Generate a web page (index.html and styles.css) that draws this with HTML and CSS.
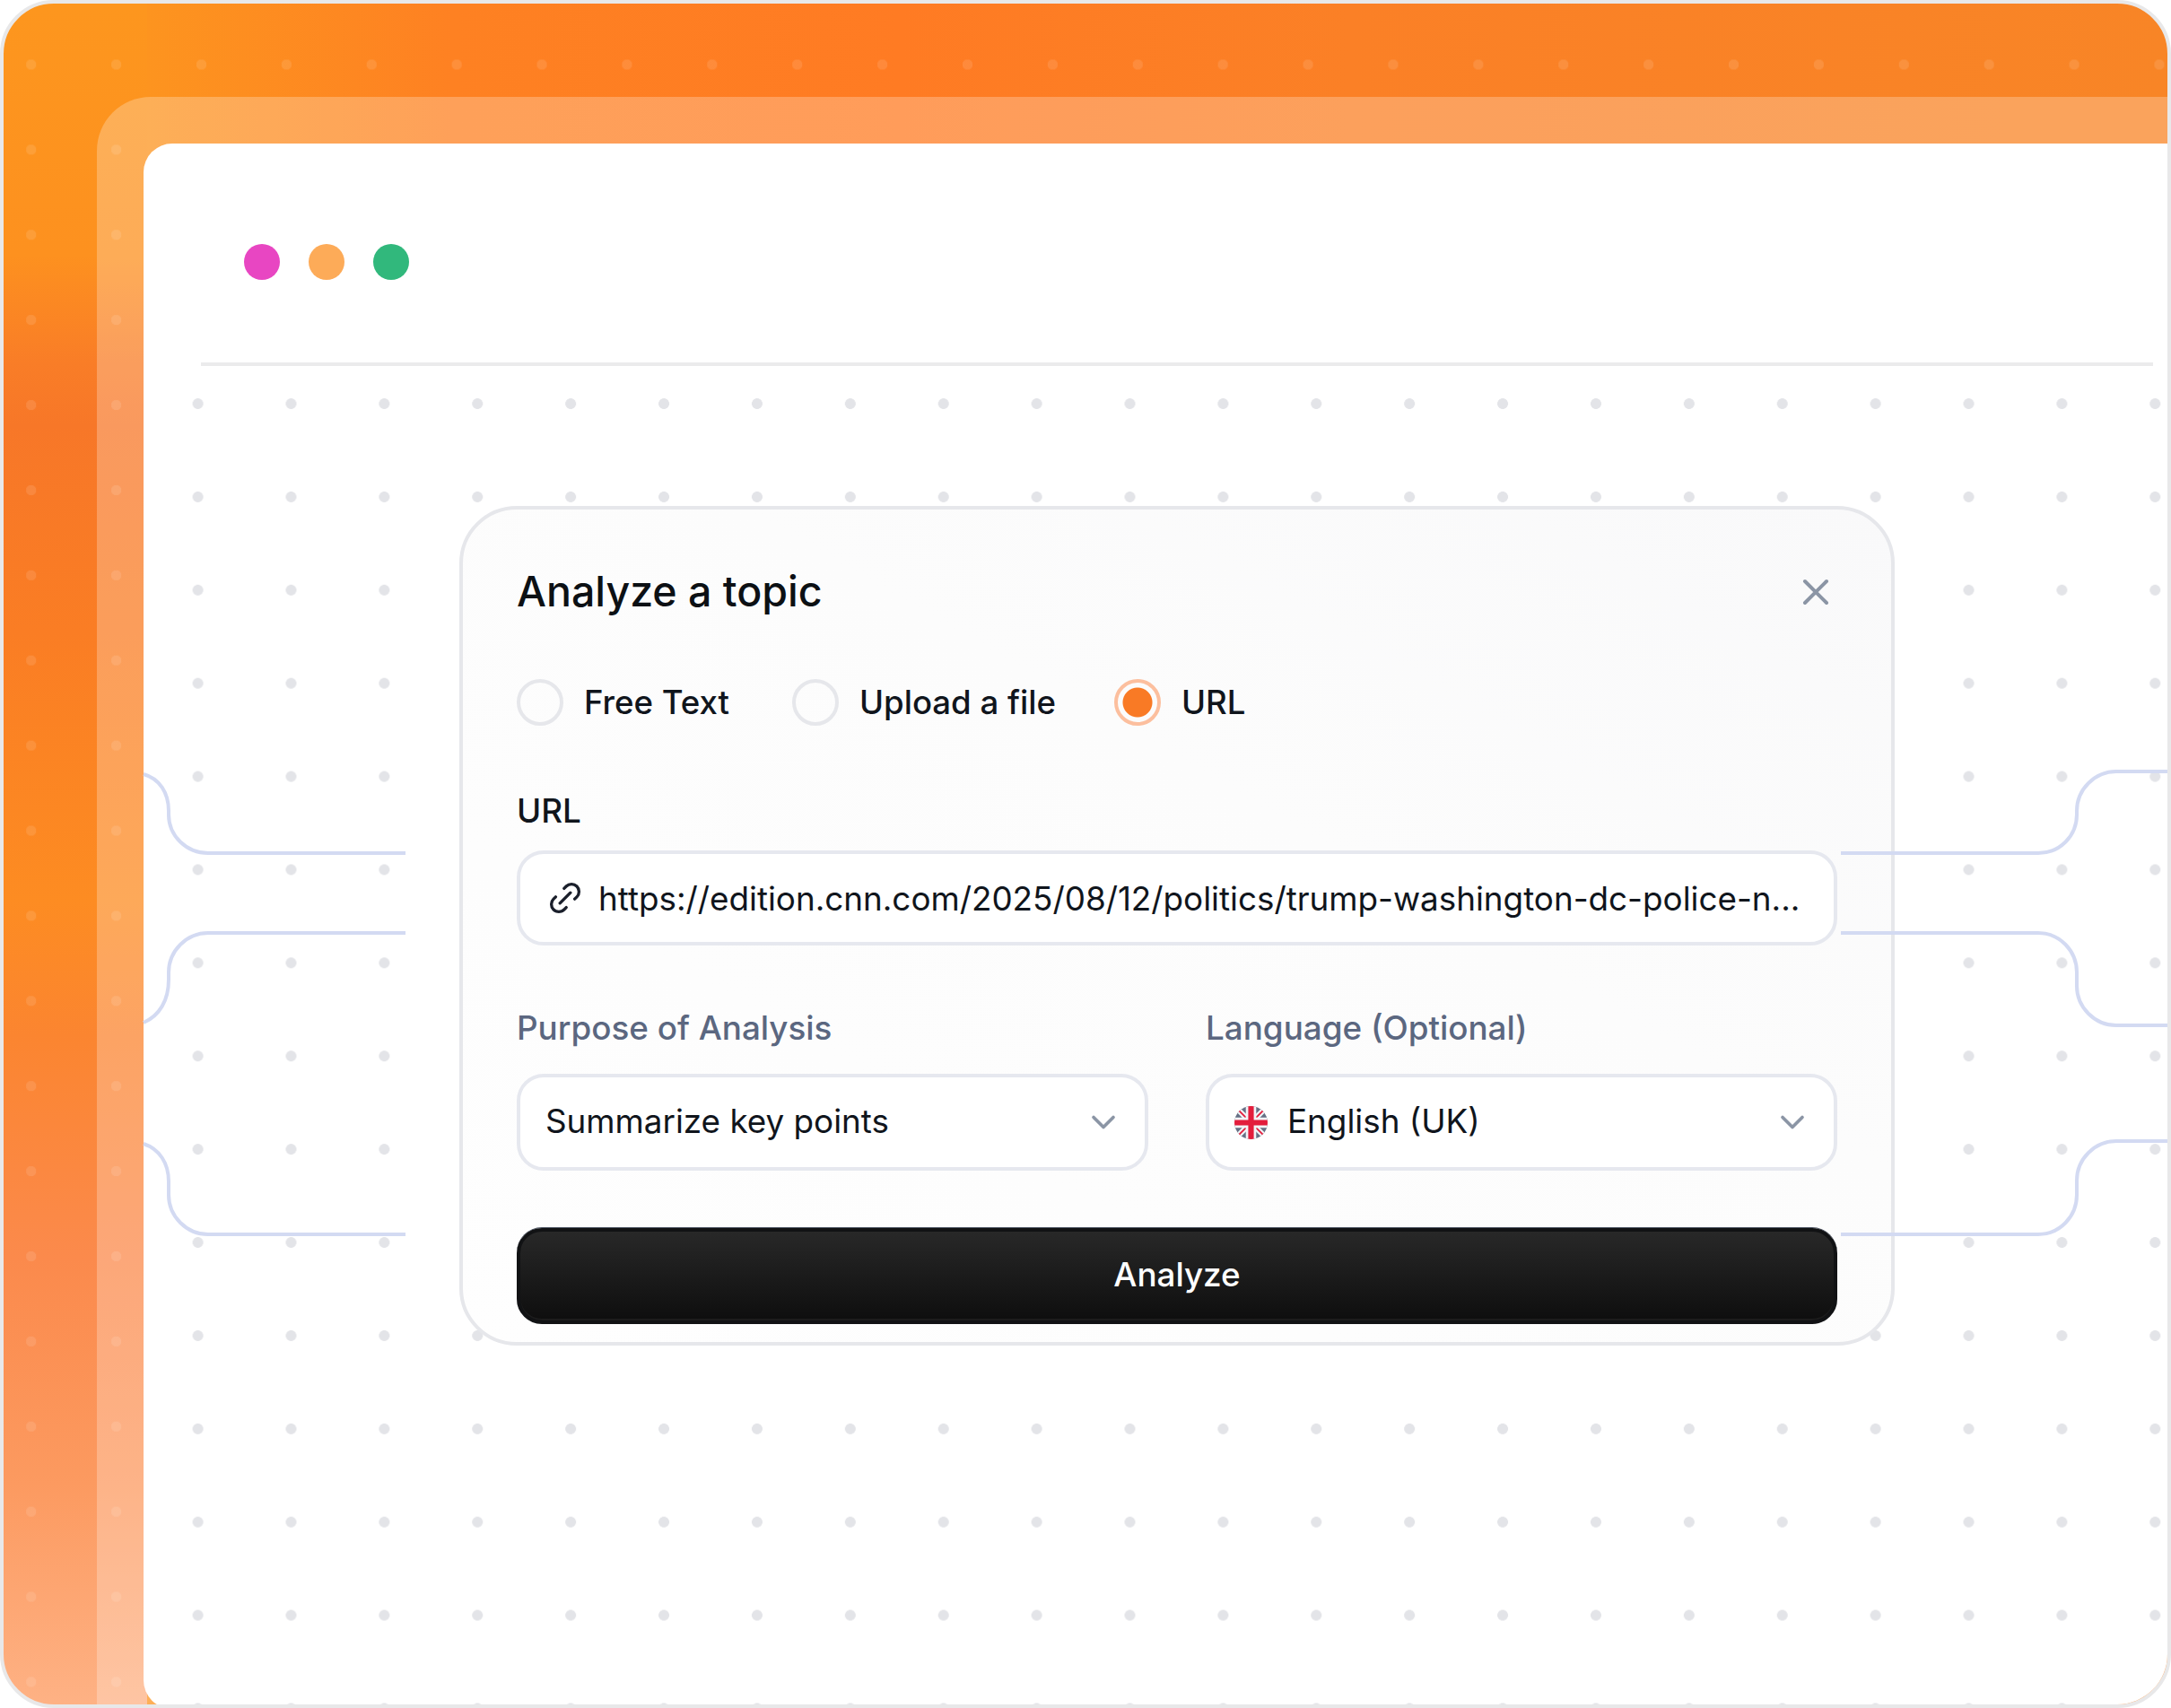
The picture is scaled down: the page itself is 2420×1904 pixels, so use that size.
FILE: index.html
```html
<!DOCTYPE html>
<html lang="en">
<head>
    <meta charset="UTF-8">
    <title>Analyze a topic</title>
    <link rel="stylesheet" href="styles.css">
</head>
<body>
    <div class="frame">
        <div class="band">
            <div class="window">
                <div class="window-bar">
                    <span class="light light-pink"></span>
                    <span class="light light-orange"></span>
                    <span class="light light-green"></span>
                </div>
                <div class="canvas">
                    <div class="modal">
                        <div class="modal-head">
                            <h1>Analyze a topic</h1>
                            <svg class="icon-close" viewBox="0 0 24 24" fill="none">
                                <path d="M18 6L6 18M6 6L18 18" stroke="currentColor" stroke-width="2" stroke-linecap="round" stroke-linejoin="round"/>
                            </svg>
                        </div>
                        <div class="radios">
                            <div class="radio-item"><span class="radio"></span>Free Text</div>
                            <div class="radio-item"><span class="radio"></span>Upload a file</div>
                            <div class="radio-item"><span class="radio radio-on"></span>URL</div>
                        </div>
                        <div class="label label-url">URL</div>
                        <div class="field field-url">
                            <svg class="icon-link" viewBox="0 0 24 24" fill="none">
                                <path d="M12.7076 18.3644L11.2933 19.7786C9.34072 21.7313 6.1749 21.7313 4.22228 19.7786C2.26966 17.826 2.26966 14.6602 4.22228 12.7076L5.63649 11.2933M18.3644 12.7076L19.7786 11.2933C21.7312 9.34072 21.7312 6.1749 19.7786 4.22228C17.826 2.26966 14.6602 2.26966 12.7076 4.22228L11.2933 5.63649M8.49996 15.5L15.5 8.49996" stroke="currentColor" stroke-width="2" stroke-linecap="round" stroke-linejoin="round"/>
                            </svg>
                            <span>https://edition.cnn.com/2025/08/12/politics/trump-washington-dc-police-n...</span>
                        </div>
                        <div class="columns">
                            <div>
                                <div class="label label-muted">Purpose of Analysis</div>
                                <div class="field field-select">
                                    <span class="select-text">Summarize key points</span>
                                    <svg class="icon-chevron" viewBox="0 0 24 24" fill="none">
                                        <path d="M6 9L12 15L18 9" stroke="currentColor" stroke-width="2" stroke-linecap="round" stroke-linejoin="round"/>
                                    </svg>
                                </div>
                            </div>
                            <div>
                                <div class="label label-muted">Language (Optional)</div>
                                <div class="field field-select">
                                    <svg class="icon-flag" viewBox="0 0 24 24">
                                        <clipPath id="flagClip"><circle cx="12" cy="12" r="12"/></clipPath>
                                        <g clip-path="url(#flagClip)">
                                            <rect width="24" height="24" fill="#667085"/>
                                            <path d="M0 0L24 24M24 0L0 24" stroke="#f2f4f7" stroke-width="4"/>
                                            <path d="M3 3L21 21M21 3L3 21" stroke="#e31d3c" stroke-width="1.2"/>
                                            <path d="M12 0V24M0 12H24" stroke="#f2f4f7" stroke-width="7.5"/>
                                            <path d="M12 0V24M0 12H24" stroke="#e31d3c" stroke-width="4"/>
                                        </g>
                                    </svg>
                                    <span class="select-text">English (UK)</span>
                                    <svg class="icon-chevron" viewBox="0 0 24 24" fill="none">
                                        <path d="M6 9L12 15L18 9" stroke="currentColor" stroke-width="2" stroke-linecap="round" stroke-linejoin="round"/>
                                    </svg>
                                </div>
                            </div>
                        </div>
                        <button class="analyze">Analyze</button>
                    </div>
                </div>
            </div>
        </div>
        <svg class="wires" viewBox="0 0 2420 1904" fill="none">
            <path d="M160 863C178 868 188 884 188 904V908C188 932 208 951 232 951H452"/>
            <path d="M452 1040H232C208 1040 188 1060 188 1084V1092C188 1115 178 1132 160 1140"/>
            <path d="M160 1275C178 1281 188 1297 188 1317V1332C188 1356 208 1376 232 1376H452"/>
            <path d="M2052 951H2272C2296 951 2315 932 2315 908V904C2315 880 2335 860 2359 860H2420"/>
            <path d="M2052 1040H2272C2296 1040 2315 1060 2315 1084V1099C2315 1123 2335 1143 2359 1143H2420"/>
            <path d="M2052 1376H2272C2296 1376 2315 1356 2315 1332V1316C2315 1292 2335 1272 2359 1272H2420"/>
        </svg>
    </div>
</body>
</html>
```

FILE: styles.css
```css
* {
    box-sizing: border-box;
}
body {
    margin: 0;
    background: #fff;
    font-family: Inter, "Liberation Sans", sans-serif;
    color: #10151c;
}
.frame {
    position: relative;
    display: flex;
    width: 2420px;
    height: 1904px;
    overflow: hidden;
    border: 4px solid #e8e8e9;
    border-radius: 60px;
    background-color: #ff7b23;
    background-image:
        radial-gradient(circle at center, rgba(255, 255, 255, 0.11) 5.5px, transparent 6px),
        linear-gradient(180deg, #fd961e 0, #fd911f 280px, #f97d27 400px, #f77728 470px, #fa7d24 700px, #fd8c22 1000px, #fb8530 1150px, #fb8a4c 1400px, #fc9a60 1650px, #feb285 1900px),
        linear-gradient(90deg, #fd941f 160px, #fe8122 500px, #ff7b23 1000px, #fb8026 1500px, #f88526 2420px);
    background-size: 94.9px 94.9px, 160px 100%, 100% 100%;
    background-position: -16.75px 20.55px, 0 0, 0 0;
    background-repeat: repeat, no-repeat, no-repeat;
}
.band {
    flex: 1;
    display: flex;
    margin: 104px 0 0 104px;
    padding: 52px 0 0 52px;
    background: rgba(255, 255, 255, 0.25);
    border-top-left-radius: 60px;
}
.window {
    flex: 1;
    display: flex;
    flex-direction: column;
    margin-bottom: -5px;
    background: #fff;
    border-radius: 32px 0 0 32px;
}
.window-bar {
    display: flex;
    gap: 32px;
    margin: 0 16px 0 64px;
    padding: 112px 0 92px 48px;
    border-bottom: 4px solid #ebebec;
}
.light {
    width: 40px;
    height: 40px;
    border-radius: 50%;
}
.light-pink {
    background: #e846c2;
}
.light-orange {
    background: #fdab58;
}
.light-green {
    background: #31b87c;
}
.canvas {
    flex: 1;
    padding: 156px 0 0 352px;
    background-image: radial-gradient(circle at center, #e3e4e8 5.6px, transparent 6.2px);
    background-size: 103.9px 103.9px;
    background-position: 8.65px -9.95px;
}
.modal {
    width: 1600px;
    height: 936px;
    padding: 60px 60px 20px;
    border: 4px solid #e6e7eb;
    border-radius: 64px;
    background: linear-gradient(30deg, #fefefe, #fcfcfc 60%, #f9f9fa);
}
.modal-head {
    display: flex;
    justify-content: space-between;
    align-items: center;
    height: 64px;
}
h1 {
    margin: 0 0 2px;
    font-size: 46.5px;
    font-weight: 450;
    line-height: 62px;
    color: #0c1014;
}
.icon-close {
    width: 48px;
    height: 48px;
    color: #8b95a5;
}
.radios {
    display: flex;
    gap: 65px;
    margin-top: 63px;
}
.radio-item {
    display: flex;
    align-items: center;
    gap: 23px;
    height: 56px;
    font-size: 36.6px;
    font-weight: 450;
}
.radio-item:first-child {
    margin-right: 5px;
}
.radio {
    width: 52px;
    height: 52px;
    border: 4px solid #e6e7eb;
    border-radius: 50%;
}
.radio-on {
    border-color: #fcbf9e;
    background: radial-gradient(circle at center, #f97a25 16px, transparent 17px);
}
.label {
    font-size: 36.8px;
    font-weight: 450;
    line-height: 52px;
}
.label-url {
    margin-top: 67px;
}
.label-muted {
    color: #5b6780;
}
.field {
    display: flex;
    align-items: center;
    border: 4px solid #e6e8ef;
    border-radius: 30px;
    background: #fff;
    font-size: 36.8px;
    white-space: nowrap;
}
.field-url {
    height: 106px;
    margin-top: 18px;
    padding-left: 30px;
    gap: 17px;
}
.icon-link {
    flex-shrink: 0;
    width: 40px;
    height: 40px;
    color: #1a1f2b;
}
.columns {
    display: grid;
    grid-template-columns: 1fr 1fr;
    gap: 64px;
    margin-top: 66px;
}
.field-select {
    height: 108px;
    margin-top: 25px;
    padding: 0 24px 0 28px;
    gap: 22px;
}
.select-text {
    flex: 1;
    margin-bottom: 4px;
}
.icon-chevron {
    width: 44px;
    height: 44px;
    color: #8b95a5;
}
.icon-flag {
    width: 37px;
    height: 37px;
}
.analyze {
    display: block;
    width: 100%;
    height: 107px;
    margin-top: 64px;
    padding-bottom: 6px;
    border: 4px solid #111214;
    border-radius: 28px;
    background: linear-gradient(180deg, #282828, #0e0e0e);
    box-shadow: 0 -1px 0 #4a5260, inset 0 -2px 0 #1c1c1c;
    font-family: inherit;
    font-size: 36.8px;
    font-weight: 450;
    color: #fff;
}
.wires {
    position: absolute;
    top: -4px;
    left: -4px;
    width: 2420px;
    height: 1904px;
    pointer-events: none;
}
.wires path {
    stroke: #d3daf2;
    stroke-width: 4;
}
```
